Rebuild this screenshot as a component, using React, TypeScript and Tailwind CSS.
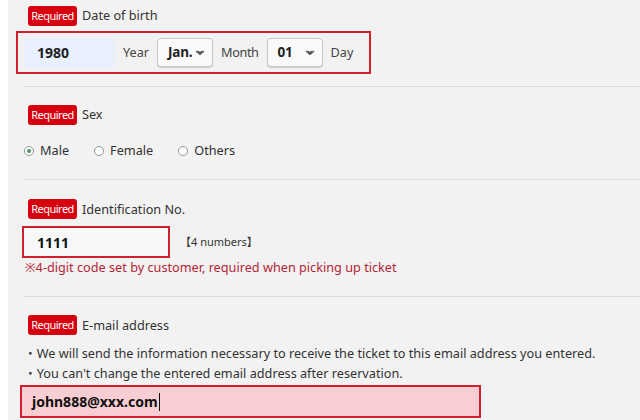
import React from 'react';

const font = { fontFamily: '"Noto Sans", "Noto Sans CJK JP", sans-serif' };

const Badge: React.FC = () => (
  <span className="inline-flex h-[20px] w-[49px] items-center justify-center rounded-[3px] bg-[#d7000f] text-[11px] tracking-[-0.5px] text-white">
    Required
  </span>
);

const Label: React.FC<{ text: string }> = ({ text }) => (
  <div className="flex items-center gap-[5px]">
    <Badge />
    <span className="text-[12.7px] text-[#333]">{text}</span>
  </div>
);

const Chevron: React.FC = () => (
  <svg width="10" height="6" viewBox="0 0 10 6" className="text-[#555]">
    <path d="M1 1l4 3.5L9 1M3 1l2 2 2-2" fill="none" stroke="currentColor" strokeWidth="1.3" />
  </svg>
);

const Select: React.FC<{ value: string }> = ({ value }) => (
  <div className="flex h-[29px] w-[56px] items-center justify-between rounded-[4px] border border-[#c8c8c8] bg-[#fafafa] pl-[10px] pr-[7px] shadow-[0_1px_1px_rgba(0,0,0,0.15)]">
    <span className="text-[13.5px] font-bold tracking-[-0.2px] text-[#222]">{value}</span>
    <Chevron />
  </div>
);

const Radio: React.FC<{ label: string; checked?: boolean }> = ({ label, checked }) => (
  <label className="flex items-center gap-[6px] text-[12.7px] text-[#333]">
    <span className="flex h-[10px] w-[10px] items-center justify-center rounded-full border border-[#8a9a9a] bg-white">
      {checked && <span className="h-[4px] w-[4px] rounded-full bg-[#4a9a5a]" />}
    </span>
    {label}
  </label>
);

export default function App() {
  return (
    <div className="flex h-[420px] w-[640px] overflow-hidden bg-white" style={font}>
      <div className="ml-[8px] flex-1 bg-[#f2f2f2]">
        {/* Date of birth */}
        <div className="pl-[20px] pt-[6px]">
          <Label text="Date of birth" />
        </div>
        <div className="ml-[8px] mt-[5px] flex h-[43px] w-[355px] items-center gap-[8px] border-2 border-[#d0202e] pl-[6px] text-[12.7px] text-[#444]">
          <div className="flex h-[30px] w-[91px] items-center bg-[#e8f0fe] pl-[13px] text-[14px] font-bold text-[#222]">
            1980
          </div>
          <span>Year</span>
          <Select value="Jan." />
          <span className="tracking-[-0.4px]">Month</span>
          <Select value="01" />
          <span>Day</span>
        </div>
        <div className="ml-[16px] mt-[12px] border-t border-[#dcdcdc]" />

        {/* Sex */}
        <div className="pl-[20px] pt-[18px]">
          <Label text="Sex" />
        </div>
        <div className="ml-[16px] mt-[16px] flex items-center gap-[25px]">
          <Radio label="Male" checked />
          <Radio label="Female" />
          <Radio label="Others" />
        </div>
        <div className="ml-[16px] mt-[19px] border-t border-[#dcdcdc]" />

        {/* Identification */}
        <div className="pl-[20px] pt-[19px]">
          <Label text="Identification No." />
        </div>
        <div className="ml-[14px] mt-[7px] flex items-center gap-[10px]">
          <div className="flex h-[32px] w-[148px] items-center border-2 border-[#d0202e] bg-[#f8f8f8] pl-[13px] text-[14px] font-bold text-[#111]">
            1111
          </div>
          <span className="text-[11px] text-[#333]">【4 numbers】</span>
        </div>
        <div className="ml-[17px] text-[12.7px] leading-[18px] text-[#b52535]">
          ※4-digit code set by customer, required when picking up ticket
        </div>
        <div className="ml-[16px] mt-[20px] border-t border-[#dcdcdc]" />

        {/* Email */}
        <div className="pl-[20px] pt-[18px]">
          <Label text="E-mail address" />
        </div>
        <div className="ml-[16px] mt-[8px] text-[12.7px] leading-[20px] text-[#333]">
          <div>・We will send the information necessary to receive the ticket to this email address you entered.</div>
          <div>・You can't change the entered email address after reservation.</div>
        </div>
        <div className="ml-[12px] mt-[2px] flex h-[33px] w-[461px] items-center border-2 border-[#d0202e] bg-[#f9ced2] pl-[10px] text-[14px] font-bold text-[#111]">
          john888@xxx.com<span className="ml-[1px] h-[18px] w-[1px] bg-[#111]" />
        </div>
      </div>
    </div>
  );
}
